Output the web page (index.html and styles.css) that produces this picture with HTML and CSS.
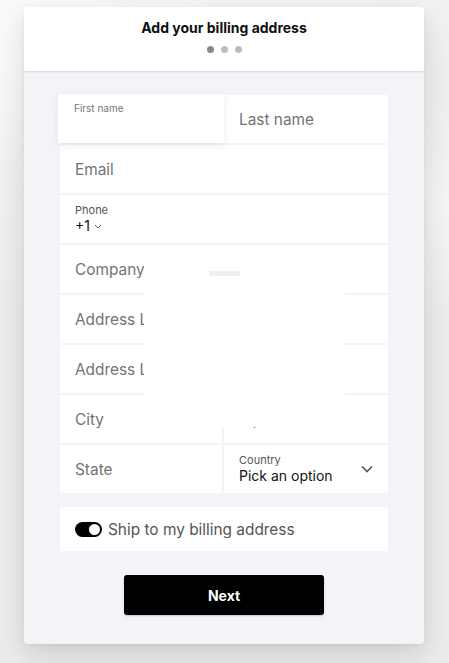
FILE: index.html
```html
<!DOCTYPE html>
<html>
<head>
<meta charset="utf-8">
<link rel="stylesheet" href="styles.css">
</head>
<body>
<div class="card">
  <header class="head">
    <h1 class="title">Add your billing address</h1>
    <div class="dots"><span class="dot on"></span><span class="dot"></span><span class="dot"></span></div>
  </header>
  <div class="body">
    <div class="form">
      <div class="cell focus"><span class="flabel">First name</span></div>
      <div class="cell"><span class="ph">Last name</span></div>
      <div class="cell wide"><span class="ph">Email</span></div>
      <div class="cell wide stack">
        <span class="label">Phone</span>
        <span class="val">+1 <svg class="chev-s" viewBox="0 0 8 5" width="8" height="5"><path d="M1 1l3 3 3-3" fill="none" stroke="#666" stroke-width="1"/></svg></span>
      </div>
      <div class="cell wide"><span class="ph">Company</span></div>
      <div class="cell wide"><span class="ph">Address Line 1</span></div>
      <div class="cell wide"><span class="ph">Address Line 2</span></div>
      <div class="cell"><span class="ph">City</span></div>
      <div class="cell"><span class="ph">Zip / Postal</span></div>
      <div class="cell"><span class="ph">State</span></div>
      <div class="cell stack select">
        <span class="label">Country</span>
        <span class="val">Pick an option</span>
        <svg class="chev" viewBox="0 0 12 8" width="12" height="8"><path d="M1 1.5l5 5 5-5" fill="none" stroke="#555" stroke-width="1.6"/></svg>
      </div>
      <div class="overlay"><span class="skel"></span></div>
    </div>
    <div class="toggle-row">
      <span class="toggle"><span class="knob"></span></span>
      <span class="toggle-text">Ship to my billing address</span>
    </div>
    <div class="actions"><button class="next">Next</button></div>
  </div>
</div>
</body>
</html>
```
FILE: styles.css
```css
* { box-sizing: border-box; }
html, body { margin: 0; padding: 0; }
body {
  width: 449px;
  height: 663px;
  overflow: hidden;
  font-family: Inter, "Noto Sans", sans-serif;
  background:
    linear-gradient(160deg, rgba(255,255,255,0.6) 0%, rgba(255,255,255,0) 40%),
    linear-gradient(20deg, rgba(255,255,255,0) 60%, rgba(255,255,255,0.5) 75%, rgba(255,255,255,0) 90%),
    #ececed;
  padding: 7px 25px 0 24px;
}
.card {
  width: 400px;
  height: 637px;
  border-radius: 4px;
  background: #f3f4f8;
  box-shadow: 0 12px 30px rgba(0,0,0,0.13), 0 2px 6px rgba(0,0,0,0.05);
  overflow: hidden;
  display: flex;
  flex-direction: column;
}
.head {
  height: 64px;
  background: #fff;
  box-shadow: 0 1px 2px rgba(0,0,0,0.12);
  display: flex;
  flex-direction: column;
  align-items: center;
  position: relative;
  z-index: 1;
}
.title {
  margin: 13px 0 0;
  font-size: 14px;
  font-weight: 700;
  line-height: 16px;
  color: #111;
}
.dots { display: flex; gap: 7px; margin-top: 10px; }
.dot { width: 7px; height: 7px; border-radius: 50%; background: #bdbdbd; }
.dot.on { background: #8a8a8a; }
.body {
  flex: 1;
  padding: 24px 36px 0;
  display: flex;
  flex-direction: column;
}
.form {
  position: relative;
  display: grid;
  grid-template-columns: 162px 164px;
  grid-auto-rows: 48px;
  gap: 2px;
}
.cell {
  background: #fff;
  display: flex;
  align-items: center;
  padding: 0 15px;
  position: relative;
}
.wide { grid-column: 1 / 3; }
.focus {
  margin: -1px -2px 0 -2px;
  box-shadow: 0 2px 8px rgba(0,0,0,0.08);
  align-items: flex-start;
  padding: 8px 16px;
  z-index: 2;
}
.flabel { font-size: 10px; color: #777; line-height: 12px; }
.ph { font-size: 15.4px; color: #737373; white-space: nowrap; }
.stack { flex-direction: column; align-items: flex-start; justify-content: center; gap: 0; }
.label { font-size: 11px; color: #555; line-height: 13px; }
.val { font-size: 14px; color: #111; line-height: 18px; display: flex; align-items: center; gap: 4px; }
.chev-s { margin-top: 1px; }
.select .chev { position: absolute; right: 15px; top: 20px; }
.overlay {
  position: absolute;
  left: 84px;
  top: 150px;
  width: 201px;
  height: 182px;
  background: #fff;
  z-index: 3;
}
.skel {
  position: absolute;
  left: 65px;
  top: 26px;
  width: 31px;
  height: 5px;
  background: #eef0f4;
}
.toggle-row {
  margin-top: 14px;
  height: 44px;
  background: #fff;
  display: flex;
  align-items: center;
  padding: 0 15px;
  gap: 6px;
}
.toggle {
  width: 27px;
  height: 15px;
  border-radius: 8px;
  background: #000;
  position: relative;
}
.knob {
  position: absolute;
  right: 2px;
  top: 2px;
  width: 11px;
  height: 11px;
  border-radius: 50%;
  background: #fff;
}
.toggle-text { font-size: 15.4px; color: #555; }
.actions { display: flex; justify-content: center; margin-top: 24px; }
.next {
  width: 200px;
  height: 40px;
  background: #000;
  color: #fff;
  border: 0;
  border-radius: 3px;
  font-family: Inter, sans-serif;
  font-size: 14px;
  font-weight: 700;
  box-shadow: 0 1px 2px rgba(0,0,0,0.2);
}
```
